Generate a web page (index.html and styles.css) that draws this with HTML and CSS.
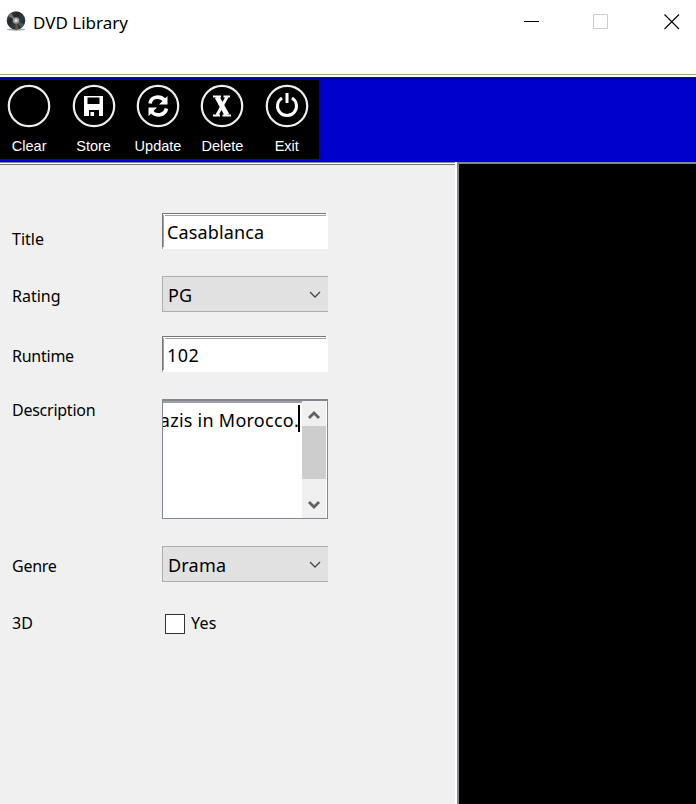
FILE: index.html
```html
<!DOCTYPE html>
<html lang="en">
<head>
<meta charset="utf-8">
<title>DVD Library</title>
<link rel="stylesheet" href="styles.css">
</head>
<body>
<div class="window">
  <header class="titlebar">
    <svg class="disc" width="22" height="24" viewBox="0 0 22 24">
      <defs>
        <linearGradient id="sheen" x1="0" y1="0" x2="1" y2="1">
          <stop offset="0" stop-color="#555"/><stop offset=".35" stop-color="#252525"/>
          <stop offset=".6" stop-color="#303b3e"/><stop offset="1" stop-color="#161616"/>
        </linearGradient>
      </defs>
      <ellipse cx="11" cy="19.500" rx="9.500" ry="1.200" fill="#aaa"/>
      <circle cx="11" cy="10.500" r="9.300" fill="url(#sheen)"/>
      <path d="M11 10.500L3 6A9 9 0 0 1 6 3Z" fill="#65737a"/>
      <path d="M11 10.500L19 14A9 9 0 0 1 16 18Z" fill="#3f5a66"/>
      <path d="M11 10.500L10 19L14 19Z" fill="#5d5638"/>
      <circle cx="11" cy="10.500" r="3.300" fill="#999"/>
      <circle cx="11" cy="10.500" r="1.300" fill="#eee"/>
    </svg>
    <h1>DVD Library</h1>
    <div class="controls">
      <svg width="16" height="16"><path d="M0 8.500H15" stroke="#000"/></svg>
      <svg width="16" height="16"><path d="M-.5 1.500H13.500V15.500H-.5Z" fill="none" stroke="#ccc"/></svg>
      <svg width="16" height="16"><path d="M.5 1.500L15 16M15 1.500L.5 16" stroke="#000" stroke-width="1.1"/></svg>
    </div>
  </header>
  <nav class="toolbar">
    <div class="tools">
      <div class="tool"><svg width="44" height="44" viewBox="0 0 44 44"><circle class="ring" cx="22" cy="22" r="20.200"/></svg><span>Clear</span></div>
      <div class="tool"><svg width="44" height="44" viewBox="0 0 44 44"><circle class="ring" cx="22" cy="22" r="20.200"/><path fill="#fff" fill-rule="evenodd" d="M12 12H31V32H12ZM15.500 13.500V20H27.500V13.500ZM17 26V32H27V26ZM18.500 28H22V32H18.500Z"/></svg><span>Store</span></div>
      <div class="tool"><svg width="44" height="44" viewBox="0 0 44 44"><circle class="ring" cx="22" cy="22" r="20.200"/><path d="M14 19.500C15 12.500 24.500 11 28.500 16.500M30.500 24.500C29 31.500 19.500 33 15.500 27.500" fill="none" stroke="#fff" stroke-width="3.600"/><path d="M31.500 12V20.500H23ZM12.500 32V23.500H21Z" fill="#fff"/></svg><span>Update</span></div>
      <div class="tool"><svg width="44" height="44" viewBox="0 0 44 44"><circle class="ring" cx="22" cy="22" r="20.200"/><path d="M17 13L27 31" stroke="#fff" stroke-width="4.800"/><path d="M27 13L17 31" stroke="#fff" stroke-width="3"/><path d="M13 12.500H21M23.500 12.500H30M13 31.500H20M22.500 31.500H31" stroke="#fff" stroke-width="2.200"/></svg><span>Delete</span></div>
      <div class="tool"><svg width="44" height="44" viewBox="0 0 44 44"><circle class="ring" cx="22" cy="22" r="20.200"/><path d="M17 14A9.500 9.500 0 1 0 27 14M22 9V19" fill="none" stroke="#fff" stroke-width="3"/></svg><span>Exit</span></div>
    </div>
  </nav>
  <main>
    <form class="form">
      <div class="row row-title"><label class="label">Title</label><div class="field">Casablanca</div></div>
      <div class="row row-rating"><label class="label">Rating</label><div class="select">PG<svg width="12" height="8"><path d="M1 1L6 6L11 1" fill="none" stroke="#444" stroke-width="1.300"/></svg></div></div>
      <div class="row row-runtime"><label class="label tight">Runtime</label><div class="field number">102</div></div>
      <div class="row row-description">
        <label class="label tight">Description</label>
        <div class="area">
          <div class="text"><span>azis in Morocco.</span><i class="caret"></i></div>
          <div class="scroll">
            <svg width="14" height="10"><path d="M2 8L7 3L12 8" fill="none" stroke="#606060" stroke-width="2.800"/></svg>
            <div class="thumb"></div>
            <svg width="14" height="10"><path d="M2 2L7 7L12 2" fill="none" stroke="#606060" stroke-width="2.800"/></svg>
          </div>
        </div>
      </div>
      <div class="row row-genre"><label class="label tight">Genre</label><div class="select">Drama<svg width="12" height="8"><path d="M1 1L6 6L11 1" fill="none" stroke="#444" stroke-width="1.300"/></svg></div></div>
      <div class="row row-3d"><label class="label">3D</label><div class="check"><i class="box"></i><span>Yes</span></div></div>
    </form>
    <section class="list"></section>
  </main>
</div>
</body>
</html>
```
FILE: styles.css
```css
* { box-sizing: border-box; }
body { margin: 0; background: #fff; color: #000; font-family: "Noto Sans", sans-serif; }
.window { width: 696px; height: 804px; overflow: hidden; display: flex; flex-direction: column; }

.titlebar { height: 74px; display: flex; align-items: flex-start; padding: 10px 16px 0 5px; flex: none; }
.disc { flex: none; }
h1 { margin: 0 0 0 6px; font-size: 17px; font-weight: 400; line-height: 25px; letter-spacing: 0; }
.controls { display: flex; gap: 54px; margin: 3px 0 0 auto; }
.controls svg { overflow: visible; }

.toolbar {
  height: 88px;
  flex: none;
  border-top: 1px solid #a0a0a0;
  padding-top: 5px;
  background: linear-gradient(#fff 2px, #0000cd 2px, #0000cd 3px, #0000a0 3px, #0000a0 5px, #0000cd 5px, #0000cd 85px, #0000ee 86px, #000080 87px);
}
.tools { width: 319px; height: 79px; background: #000; display: flex; }
.tool { width: 64.4px; flex: none; display: flex; flex-direction: column; align-items: center; padding: 3px 6px 0 0; color: #fff; font: 14.5px/18px "Liberation Sans", sans-serif; }
.tool svg { flex: none; margin: .6px 0 9.4px; }
.ring { fill: none; stroke: #eee; stroke-width: 2.2; }

main { flex: 1; display: flex; }
.form {
  width: 457px;
  flex: none;
  background: linear-gradient(#fff, #fff) right / 2px 100% no-repeat, linear-gradient(#888 1px, #fff 1px, #fff 2px, #777 2px, #777 3px, #f0f0f0 3px);
  padding: 51px 0 0 12px;
}
.list { flex: 1; background: #000; border-left: 2px solid #828790; border-top: 2px solid #828790; }

.row { display: flex; align-items: flex-start; }
.row-title { height: 63px; }
.row-rating { height: 60px; }
.row-runtime { height: 63px; }
.row-description { height: 147px; }
.row-genre { height: 63px; }
.label { width: 150px; flex: none; font-size: 16px; line-height: 36px; padding-top: 2px; }
.tight { letter-spacing: -.25px; }
.row-title .label { padding-top: 8px; }
.row-description .label { padding: 0; line-height: 22px; }
.row-3d .label { padding: 0; line-height: 28px; }

.field, .select { width: 166px; height: 36px; font-size: 18px; letter-spacing: .15px; }
.field {
  padding-left: 5px;
  line-height: 38px;
  background:
    linear-gradient(#777, #777) 0 0 / 164px 1px no-repeat,
    linear-gradient(#777, #777) 0 0 / 1px 34px no-repeat,
    linear-gradient(#a0a0a0, #a0a0a0) 3px 2px / 161px 1px no-repeat,
    linear-gradient(#a0a0a0, #a0a0a0) 1px 2px / 1px 32px no-repeat,
    linear-gradient(#a0a0a0, #a0a0a0) 0 34px / 1px 2px no-repeat,
    #fff;
}
.number { letter-spacing: .5px; }
.select {
  display: flex;
  justify-content: space-between;
  align-items: center;
  padding: 2px 7px 0 5px;
  background: #e1e1e1;
  border: 1px solid #adadad;
  border-right: 0;
  line-height: 34px;
}
.select svg { margin-bottom: 1px; }
.row-genre .select { letter-spacing: .2px; }

.area { width: 166px; height: 120px; display: flex; background: #fff; border: 1px solid #828790; border-top-width: 2px; }
.text { width: 139px; flex: none; height: 100%; overflow: hidden; display: flex; justify-content: flex-end; align-items: flex-start; padding-right: 2px; border-top: 2px solid #a0a0a0; font-size: 18px; line-height: 35px; letter-spacing: .25px; white-space: nowrap; }
.caret { width: 2px; height: 27px; flex: none; margin: 2px 0 0 -1px; background: #000; }
.text span { flex: none; }
.scroll { width: 24px; display: flex; flex-direction: column; align-items: center; background: #f0f0f0; padding: 9px 0 8px; }
.thumb { width: 100%; height: 53px; margin: 6px 0 auto; background: #cdcdcd; }

.check { display: flex; align-items: center; height: 26px; font-size: 16px; line-height: 26px; letter-spacing: .2px; }
.check span { padding-top: 2px; }
.box { width: 20px; height: 20px; margin: 3px 6px 0 3px; background: #fff; border: 1px solid #333; }
```
